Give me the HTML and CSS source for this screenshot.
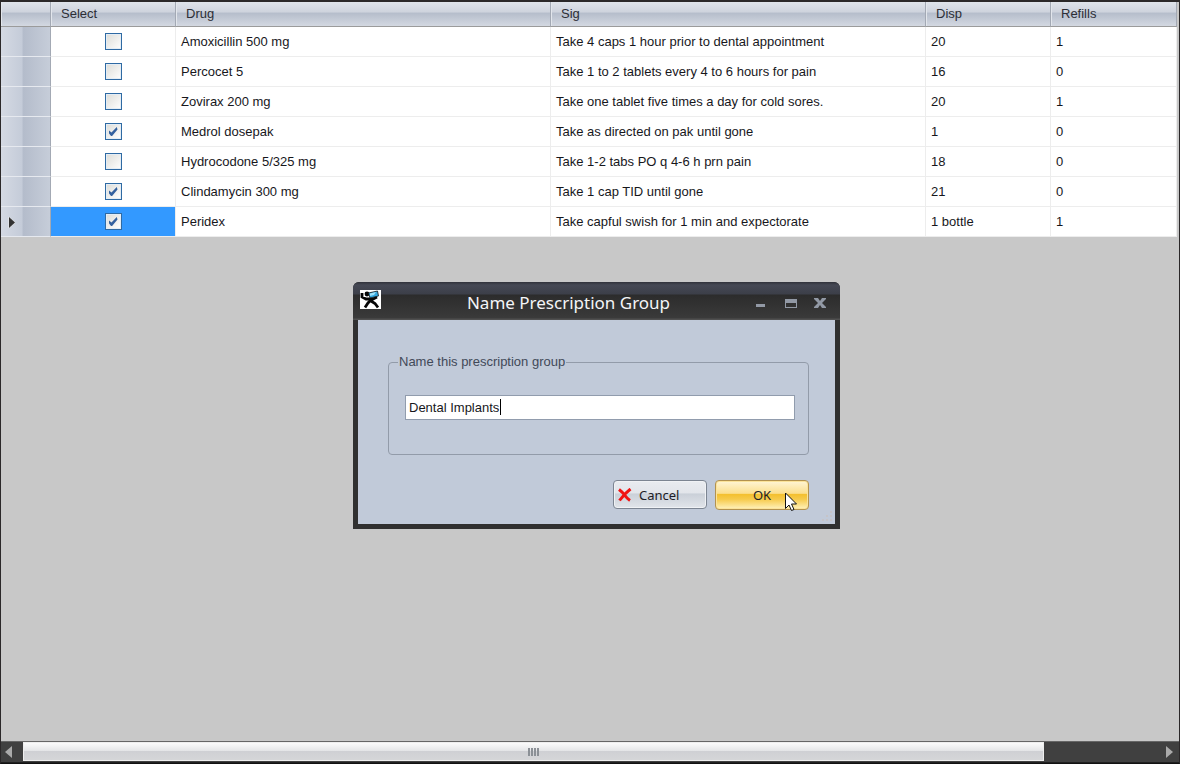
FILE: index.html
```html
<!DOCTYPE html>
<html lang="en">
<head>
<meta charset="utf-8">
<title>Name Prescription Group</title>
<link rel="stylesheet" href="styles.css">
</head>
<body>
<main class="window">
  <div class="grid-area">
    <table class="grid">
      <colgroup><col class="col-marker"><col class="col-small"><col class="col-wide"><col class="col-wide"><col class="col-small"><col></colgroup>
      <thead>
        <tr><th class="corner"></th><th scope="col">Select</th><th scope="col">Drug</th><th scope="col">Sig</th><th scope="col">Disp</th><th scope="col">Refills</th></tr>
      </thead>
      <tbody>
        <tr><td class="marker"></td><td class="pick"><input class="check" type="checkbox" aria-label="Select Amoxicillin 500 mg"></td><td>Amoxicillin 500 mg</td><td>Take 4 caps 1 hour prior to dental appointment</td><td>20</td><td>1</td></tr>
        <tr><td class="marker"></td><td class="pick"><input class="check" type="checkbox" aria-label="Select Percocet 5"></td><td>Percocet 5</td><td>Take 1 to 2 tablets every 4 to 6 hours for pain</td><td>16</td><td>0</td></tr>
        <tr><td class="marker"></td><td class="pick"><input class="check" type="checkbox" aria-label="Select Zovirax 200 mg"></td><td>Zovirax 200 mg</td><td>Take one tablet five times a day for cold sores.</td><td>20</td><td>1</td></tr>
        <tr><td class="marker"></td><td class="pick"><input class="check" type="checkbox" checked aria-label="Select Medrol dosepak"></td><td>Medrol dosepak</td><td>Take as directed on pak until gone</td><td>1</td><td>0</td></tr>
        <tr><td class="marker"></td><td class="pick"><input class="check" type="checkbox" aria-label="Select Hydrocodone 5/325 mg"></td><td>Hydrocodone 5/325 mg</td><td>Take 1-2 tabs PO q 4-6 h prn pain</td><td>18</td><td>0</td></tr>
        <tr><td class="marker"></td><td class="pick"><input class="check" type="checkbox" checked aria-label="Select Clindamycin 300 mg"></td><td>Clindamycin 300 mg</td><td>Take 1 cap TID until gone</td><td>21</td><td>0</td></tr>
        <tr><td class="marker"><svg class="arrow" viewBox="0 0 8 13" aria-hidden="true"><path d="M1 1v11l6-5.500z"/></svg></td><td class="pick current"><input class="check" type="checkbox" checked aria-label="Select Peridex"></td><td>Peridex</td><td>Take capful swish for 1 min and expectorate</td><td>1 bottle</td><td>1</td></tr>
      </tbody>
    </table>
  </div>
  <div class="scrollbar">
    <button class="scroll-step" type="button" aria-label="Scroll left"><svg viewBox="0 0 8 12" aria-hidden="true"><path d="M7 0v12L0 6z"/></svg></button>
    <div class="scroll-track"><div class="scroll-thumb"><i></i><i></i><i></i><i></i></div></div>
    <button class="scroll-step" type="button" aria-label="Scroll right"><svg viewBox="0 0 8 12" aria-hidden="true"><path d="M1 0v12l7-6z"/></svg></button>
  </div>

  <form class="dialog" role="dialog" aria-labelledby="dialog-title">
    <header class="titlebar">
      <svg class="logo" viewBox="0 0 21 19" aria-hidden="true"><rect width="21" height="19" fill="#fff"/><path d="M2 3v4l4 2h7l4-2M8 8l3 4M11 10l-3 3-3 4.500M11 11l4 2.500 3 4" fill="none" stroke="#050505" stroke-width="2.800"/><circle cx="7" cy="4" r="2.400" fill="#050505"/><path d="M8.500 3l9-2 1 5-8.500 2z" fill="#35a9e0" stroke="#111" stroke-width=".8"/><path d="M10 3.500l6-1.500-2 3-4 1z" fill="#9fe2fa"/></svg>
      <h1 class="title" id="dialog-title">Name Prescription Group</h1>
      <div class="window-buttons">
        <button type="button" aria-label="Minimize"><svg viewBox="0 0 12 12" aria-hidden="true"><path d="M0 7h9v3H0z"/></svg></button>
        <button type="button" aria-label="Maximize"><svg viewBox="0 0 12 12" aria-hidden="true"><path fill-rule="evenodd" d="M0 2h12v9H0zM1 6h10v4H1z"/></svg></button>
        <button type="button" aria-label="Close"><svg viewBox="0 0 12 12" aria-hidden="true"><path d="M0 1h4l2 3 2-3h4v1L8 6l4 4v1H8L6 8l-2 3H0v-1l4-4-4-4z"/></svg></button>
      </div>
    </header>
    <div class="dialog-body">
      <fieldset class="group">
        <legend><label for="group-name">Name this prescription group</label></legend>
        <div class="field"><input id="group-name" class="name-input" type="text" value="Dental Implants"><span class="caret"></span></div>
      </fieldset>
      <div class="actions">
        <button class="button cancel" type="button"><svg viewBox="0 0 14 14" aria-hidden="true"><path d="M1 1.500q4 3 6 6t5 5M12.500 1Q6 6 1.500 12.500"/></svg>Cancel</button>
        <button class="button ok" type="submit">OK</button>
      </div>
    </div>
    <svg class="grip" viewBox="0 0 10 10" aria-hidden="true"><path d="M8 0h2v2H8zM4 4h2v2H4zM8 4h2v2H8zM0 8h2v2H0zM4 8h2v2H4zM8 8h2v2H8z"/></svg>
    <svg class="pointer" viewBox="0 0 12 20" aria-hidden="true"><path d="M.5 1v15.500L4 13l2.500 5.500 2.500-1L6.500 12h5z"/></svg>
  </form>
</main>
</body>
</html>
```

FILE: styles.css
```css
* { box-sizing: border-box; }

body {
  margin: 0;
  font: 13px/20px "Liberation Sans", Arial, sans-serif;
  color: #17171c;
}

button, input { font: inherit; color: inherit; }

.window {
  position: relative;
  display: flex;
  flex-direction: column;
  min-height: 100vh;
  background: #c8c8c8;
  border: 1px solid #2b2829;
  border-top-width: 2px;
  border-bottom-color: #111;
}

.grid-area { flex: 1; padding-right: 2px; }

/* Prescription table */
.grid {
  width: 100%;
  table-layout: fixed;
  border-collapse: separate;
  border-spacing: 0;
  background: #fff;
}
.col-marker { width: 50px; }
.col-small { width: 125px; }
.col-wide { width: 375px; }

.grid th {
  height: 25px;
  padding: 0 10px;
  text-align: left;
  font-weight: 400;
  color: #2c2e36;
  background: linear-gradient(#dfe3ea 0, #ced3dd 42%, #b5bdcb 46%, #c8ced9 80%, #d3d8e1 100%);
  border-bottom: 1px solid #9b9b9b;
  border-right: 1px solid #a3a9b4;
  box-shadow: inset 1px 0 #e2e6ec;
}
.grid td {
  height: 30px;
  padding: 0 5px;
  border-right: 1px solid #ededed;
  border-bottom: 1px solid #ededed;
}
.grid .marker {
  padding: 2px 7px 0;
  background: linear-gradient(90deg, #d4d9e3 0, #c5ccd9 42%, #b4bccb 46%, #c6cdd9 100%);
  border-right-color: #a3a9b4;
  border-bottom-color: #e6e9ef;
}
.grid .pick { text-align: center; }
.grid .current { background: #3399ff; }
.arrow { display: block; width: 8px; height: 13px; fill: #333; stroke: #eee; stroke-width: 1; paint-order: stroke; }

.check {
  appearance: none;
  display: block;
  width: 17px;
  height: 17px;
  margin: 0 auto;
  border: 1px solid #2f6aa3;
  background: linear-gradient(135deg, #dcdcd7, #fff);
  box-shadow: inset 0 0 0 1px #e4edf5;
}
.check:checked::before {
  content: "";
  display: block;
  width: 9px;
  height: 9px;
  margin: 3px;
  background: #34619f;
  clip-path: polygon(0 33%, 33% 60%, 92% 0, 100% 28%, 40% 100%, 28% 100%, 0 65%);
}

/* Horizontal scroll bar */
.scrollbar {
  display: flex;
  height: 22px;
  background: #404040;
  border-top: 1px solid #666;
  border-bottom: 1px solid #202020;
}
.scroll-step {
  width: 22px;
  padding: 0 4px;
  display: flex;
  align-items: center;
  border: 0;
  background: none;
}
.scroll-step:last-child { justify-content: flex-end; padding-right: 6px; }
.scroll-step svg { width: 8px; height: 12px; fill: #aaa; }
.scroll-track { flex: 1; }
.scroll-thumb {
  display: flex;
  align-items: center;
  justify-content: center;
  gap: 1px;
  width: 90%;
  height: 19px;
  background: linear-gradient(#fbfbfb, #e5e6e8 44%, #cfd0d4 48%, #d5d6d8);
  border: 1px solid #eee;
}
.scroll-thumb i { width: 2px; height: 8px; background: #8b9096; }

/* Naming dialog */
.dialog {
  position: absolute;
  left: 352px;
  top: 280px;
  width: 487px;
  display: flex;
  flex-direction: column;
  padding: 0 5px 5px;
  background: #303030;
  border-radius: 6px 6px 0 0;
}
.titlebar {
  display: flex;
  align-items: flex-start;
  height: 38px;
  margin: 0 -5px;
  padding: 8px 14px 0 7px;
  background: linear-gradient(#30323a 0, #454854 3px, #3c3f49 12px, #2c2c2c 13px, #3a3a3a 36px, #505050 37px);
  border-radius: 6px 6px 0 0;
}
.logo { width: 21px; height: 19px; }
.title {
  flex: 1;
  margin: 0;
  text-align: center;
  font: 17px/26px "Noto Sans", "Open Sans", sans-serif;
  color: #f4f5f8;
}
.window-buttons { display: flex; gap: 17px; padding-top: 7px; }
.window-buttons button { width: 12px; height: 12px; padding: 0; border: 0; background: none; display: flex; }
.window-buttons svg { width: 12px; height: 12px; fill: #9299a5; }

.dialog-body {
  padding: 32px 26px 14px 30px;
  background: #c1cad9;
}
.group {
  height: 103px;
  margin: 0;
  padding: 23px 13px 0 16px;
  border: 1px solid #929ba9;
  border-radius: 4px;
}
.group legend { padding: 0 1px; margin-left: -7px; color: #424958; }
.field { position: relative; }
.name-input {
  display: block;
  width: 100%;
  height: 25px;
  padding: 0 3px;
  border: 1px solid #919cad;
  border-radius: 0;
  background: #fff;
  outline: 0;
}
.caret { position: absolute; left: 95px; top: 4px; width: 1px; height: 16px; background: #000; }

.actions {
  display: flex;
  justify-content: flex-end;
  gap: 8px;
  margin-top: 25px;
}
.button {
  display: flex;
  align-items: center;
  width: 94px;
  height: 29px;
  padding: 0 4px;
  border: 1px solid #7c8592;
  border-radius: 4px;
  font: 13px/20px "Noto Sans", "Open Sans", sans-serif;
  color: #1d1d27;
}
.cancel {
  gap: 7px;
  background: linear-gradient(#e9ecf0, #e2e5ea 44%, #cad0d8 48%, #e1e5ea);
  box-shadow: inset 0 0 0 1px #f0f2f5;
}
.cancel svg { width: 14px; height: 14px; fill: none; stroke: #f01414; stroke-width: 3; }
.ok {
  height: 30px;
  justify-content: center;
  border-color: #b3924f;
  background: linear-gradient(#fff5d6, #fbdf8e 44%, #f4c02f 48%, #f6ca4b 65%, #fff2bd);
  box-shadow: inset 0 0 0 1px #fbe39a;
}
.grip { position: absolute; right: 8px; bottom: 8px; width: 10px; height: 10px; fill: #c6c4c8; }
.pointer { position: absolute; left: 432px; top: 210px; width: 12px; height: 20px; fill: #fff; stroke: #111; stroke-width: 1; }
```
